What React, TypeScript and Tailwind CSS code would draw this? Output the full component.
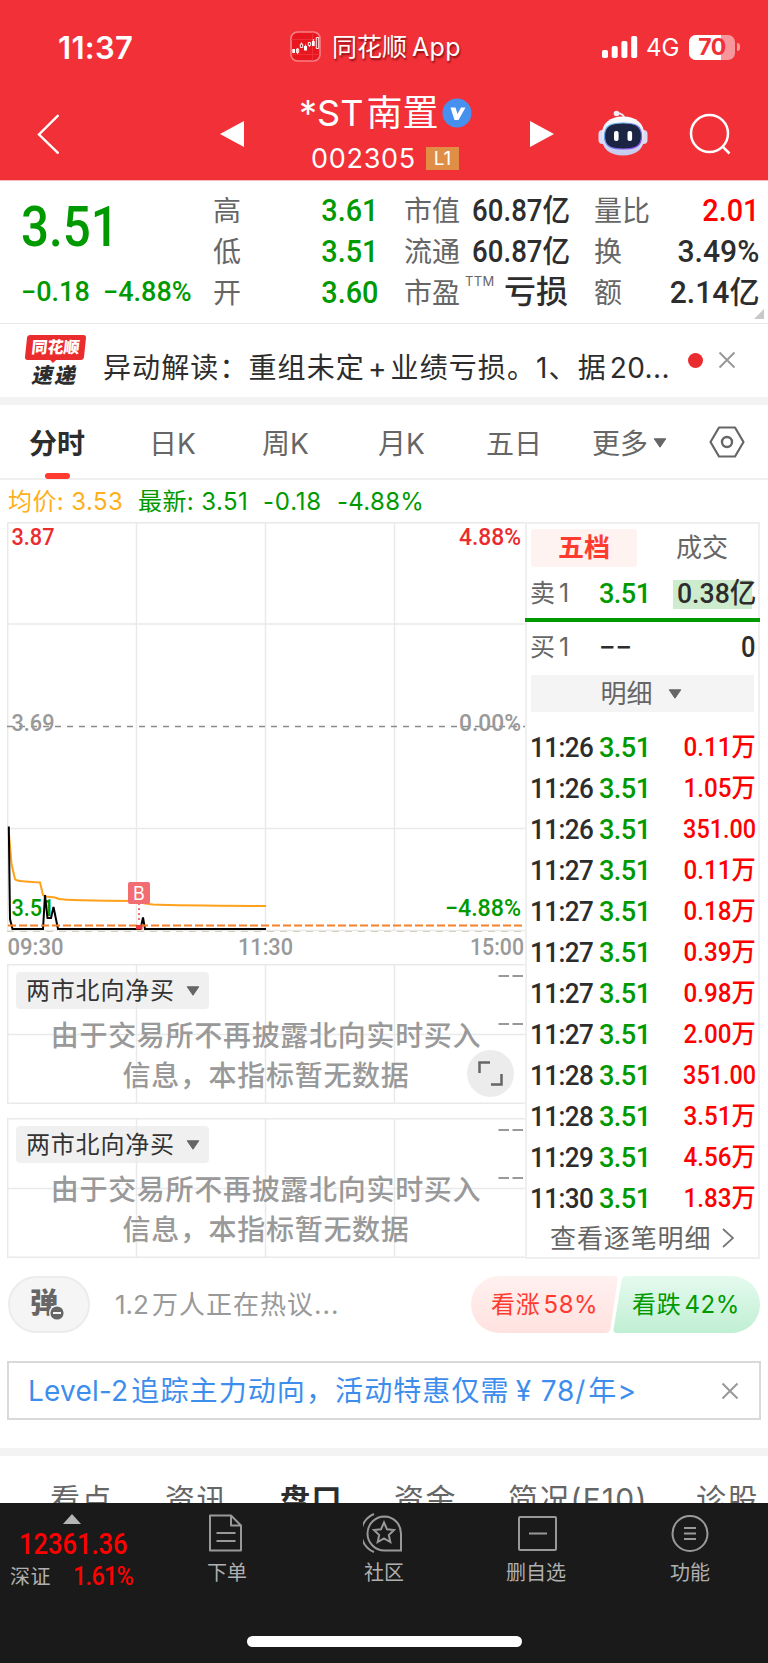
import type { ReactNode } from "react";
import clsx from "clsx";

const GREEN = "#009a00";

const ticks = [
  { time: "11:26", price: "3.51", amount: "0.11万" },
  { time: "11:26", price: "3.51", amount: "1.05万" },
  { time: "11:26", price: "3.51", amount: "351.00" },
  { time: "11:27", price: "3.51", amount: "0.11万" },
  { time: "11:27", price: "3.51", amount: "0.18万" },
  { time: "11:27", price: "3.51", amount: "0.39万" },
  { time: "11:27", price: "3.51", amount: "0.98万" },
  { time: "11:27", price: "3.51", amount: "2.00万" },
  { time: "11:28", price: "3.51", amount: "351.00" },
  { time: "11:28", price: "3.51", amount: "3.51万" },
  { time: "11:29", price: "3.51", amount: "4.56万" },
  { time: "11:30", price: "3.51", amount: "1.83万" },
];

// Condensed figures used for every price
function Num({ children, className }: { children: ReactNode; className?: string }) {
  return (
    <span
      className={clsx(
        "inline-block whitespace-nowrap font-['Roboto','Noto_Sans_CJK_SC',sans-serif] font-medium",
        className,
      )}
    >
      {children}
    </span>
  );
}

function Caret({ className }: { className?: string }) {
  return (
    <svg viewBox="0 0 14 10" className={clsx("h-[10px] w-[14px] shrink-0", className)}>
      <path d="M1.2.8h11.6L7 9.2z" fill="#666" stroke="#666" strokeLinejoin="round" />
    </svg>
  );
}

function Close({ className }: { className?: string }) {
  return (
    <svg viewBox="0 0 18 18" className={clsx("h-[18px] w-[18px] shrink-0", className)}>
      <path d="M1.500 1.500l15 15M16.500 1.500l-15 15" stroke="#999" strokeWidth="2" />
    </svg>
  );
}

function StatusBar() {
  return (
    <div className="flex h-[92px] items-center pl-[58px]">
      <span className="w-[232px] pt-[3px] text-[31px] leading-[40px] font-semibold tracking-[0.3px]">11:37</span>
      <svg viewBox="0 0 31 31" className="h-[31px] w-[31px]">
        <rect x="1" y="1" width="29" height="29" rx="6.5" fill="#e8171f" stroke="#f98085" strokeWidth="1.6" />
        <path d="M1 8.500h29M1 23.500h29M22.500 1v29" stroke="#f03a40" strokeWidth=".7" />
        <path d="M2.300 18h2.700v4h-2.700zM14 15h3v4.500h-3zM22 10h2.700v5h-2.700z" fill="#fff" />
        <path
          d="M6.500 18h2.200v3.500H6.500zM7.600 17v6M10.300 13h2.400v3.500h-2.400zM11.500 11.500v1.500M18.300 11.500h2.300v3h-2.300zM19.500 14.500v1.500M26.300 6.500h2.400v11h-2.400zM15.500 13.500v2M23.400 8v2"
          fill="none"
          stroke="#fff"
          strokeWidth=".9"
        />
      </svg>
      <span className="ml-[11px] w-[270px] pt-[2px] text-[25px] leading-[40px] text-shadow-[1px_2px_2px_rgb(90_0_0/0.7)]">
        同花顺<span className="ml-[5px] tracking-[0.3px]">App</span>
      </span>
      <svg viewBox="0 0 36 22" className="mt-[2px] h-[22px] w-9" fill="#fff">
        <rect y="14" width="6" height="8" rx="1.8" />
        <rect x="9.700" y="10" width="6" height="12" rx="1.800" />
        <rect x="19.400" y="5" width="6" height="17" rx="1.800" />
        <rect x="29.200" y="0" width="6" height="22" rx="1.800" />
      </svg>
      <span className="ml-[8px] w-[43px] pt-[3px] text-[24px] leading-[40px]">4G</span>
      <div className="relative mt-[2px] flex h-[25px] w-[46px] items-center justify-center">
        <div className="absolute inset-0 overflow-hidden rounded-[7px] bg-[#f8979b]">
          <div className="h-full w-8 bg-white" />
        </div>
        <span className="relative text-[23px] leading-[25px] font-bold tracking-[-0.5px] text-[#f23038]">70</span>
      </div>
      <div className="mt-[2px] ml-0.5 h-2 w-[3px] rounded-r-full bg-[#f8979b]" />
    </div>
  );
}

function Robot() {
  return (
    <svg viewBox="0 0 50 46" className="h-[46px] w-[50px]">
      <defs>
        <linearGradient id="shell" x1="0" y1="0" x2="0" y2="1">
          <stop offset="0" stopColor="#fff" />
          <stop offset="1" stopColor="#c3c9ee" />
        </linearGradient>
        <linearGradient id="rim" x1="0" y1="0" x2="1" y2="1">
          <stop offset="0" stopColor="#62c4ee" />
          <stop offset="1" stopColor="#8a3df0" />
        </linearGradient>
      </defs>
      <path d="M26 8c0-3-2-4.500-7-5" fill="none" stroke="#e6e6f4" strokeWidth="2" />
      <circle cx="18.500" cy="3.500" r="2.800" fill="#f3eef8" />
      <rect x="0.500" y="20" width="8" height="14" rx="4" fill="#d9dcf3" />
      <rect x="41.500" y="20" width="8" height="14" rx="4" fill="#d9dcf3" />
      <path
        d="M25 6.500C38 6.500 46.500 13 46.500 26S38 45.500 25 45.500 3.500 39 3.500 26 12 6.500 25 6.500z"
        fill="url(#shell)"
      />
      <path
        d="M25 13C38 13 43.500 16 43.500 26S38 39 25 39 6.500 36 6.500 26 12 13 25 13z"
        fill="#1c2444"
        stroke="url(#rim)"
        strokeWidth="1.200"
      />
      <rect x="16" y="21" width="4.600" height="10" rx="2" fill="#fff" />
      <rect x="29.500" y="21" width="4.600" height="10" rx="2" fill="#fff" />
    </svg>
  );
}

function TitleBar() {
  return (
    <div className="flex h-[88px] items-start">
      <svg viewBox="0 0 22 40" className="mt-[22px] ml-[37px] h-10 w-[22px]">
        <path d="M21.500 1L2 20.500l19.500 19" fill="none" stroke="#fff" strokeWidth="2.400" />
      </svg>
      <svg viewBox="0 0 24 26" className="mt-[29px] ml-[161px] h-[26px] w-6">
        <path d="M24 0v26L0 13z" fill="#fff" />
      </svg>
      <div className="ml-[55px] w-[175px]">
        <div className="flex h-[42px] items-center">
          <span className="w-[139px] text-[36px] leading-[42px] whitespace-nowrap">
            *ST<span className="ml-[3px]">南置</span>
          </span>
          <svg viewBox="0 0 30 30" className="ml-[4px] h-[30px] w-[30px] shrink-0">
            <circle cx="15" cy="15" r="14.500" fill="#4690f0" />
            <path d="M8.500 9.500h5l2 6.500 3.500-6.500h4.500l-7 12.500h-4z" fill="#fff" />
          </svg>
        </div>
        <div className="mt-[8px] flex h-8 items-center pl-[12px]">
          <span className="w-[115px] pt-px text-[27px] leading-8 tracking-[0.7px]">002305</span>
          <span className="h-[23px] w-[33px] bg-[#e08e46] text-center text-[19px] leading-[23px]">L1</span>
        </div>
      </div>
      <svg viewBox="0 0 24 26" className="mt-[29px] ml-[56px] h-[26px] w-6">
        <path d="M0 0v26l24-13z" fill="#fff" />
      </svg>
      <div className="mt-[18px] ml-[44px]">
        <Robot />
      </div>
      <svg viewBox="0 0 42 42" className="mt-[21px] ml-[41px] h-[42px] w-[42px]" fill="none" stroke="#fff" strokeWidth="2.500">
        <circle cx="20.500" cy="20.500" r="18.500" />
        <path d="M33 33l7.500 7.500" />
      </svg>
    </div>
  );
}

function Stat({ label, sup, children }: { label: string; sup?: string; children: ReactNode }) {
  return (
    <div className="flex h-[41px] items-center whitespace-nowrap">
      <span className="pt-[6px] text-[28px] leading-[35px] text-[#666]">{label}</span>
      {sup && <span className="mb-[18px] ml-[5px] text-[13px] tracking-[0.3px] text-[#666]">{sup}</span>}
      <div className="ml-auto pt-[2px] text-[31px] leading-[39px]">{children}</div>
    </div>
  );
}

function Quote() {
  return (
    <div className="flex h-[144px] border-t border-[#f9babd] border-b border-b-[#e8e8e8] bg-white pt-[7px]">
      <div className="w-[213px] pl-[21px] text-[#009a00]">
        <Num className="mt-[9px] origin-left scale-x-[0.88] text-[56px] leading-[60px]">3.51</Num>
        <div className="mt-[20px] flex text-[27px] leading-[30px]">
          <Num className="w-[82px]">−0.18</Num>
          <Num>−4.88%</Num>
        </div>
      </div>
      <div className="w-[165px] text-[#009a00]">
        <Stat label="高">
          <Num className="origin-right scale-x-[0.93]">3.61</Num>
        </Stat>
        <Stat label="低">
          <Num className="origin-right scale-x-[0.93]">3.51</Num>
        </Stat>
        <Stat label="开">
          <Num className="origin-right scale-x-[0.93]">3.60</Num>
        </Stat>
      </div>
      <div className="ml-[26px] w-[164px] text-[#2d2d2d]">
        <Stat label="市值">
          <Num className="origin-right scale-x-[0.89]">60.87亿</Num>
        </Stat>
        <Stat label="流通">
          <Num className="origin-right scale-x-[0.89]">60.87亿</Num>
        </Stat>
        <Stat label="市盈" sup="TTM">
          <Num className="text-[32px]">亏损</Num>
        </Stat>
      </div>
      <div className="relative ml-[26px] w-[174px] pr-[9px] text-[#2d2d2d]">
        <Stat label="量比">
          <Num className="origin-right scale-x-[0.93] text-[#f00]">2.01</Num>
        </Stat>
        <Stat label="换">
          <Num className="origin-right scale-x-[0.97]">3.49%</Num>
        </Stat>
        <Stat label="额">
          <Num className="origin-right scale-x-[0.97]">2.14亿</Num>
        </Stat>
        <svg viewBox="0 0 10 10" className="absolute right-[4px] bottom-[4px] h-[10px] w-[10px]">
          <path d="M10 0v10H0z" fill="#c8c8c8" />
        </svg>
      </div>
    </div>
  );
}

function News() {
  return (
    <div className="flex h-[81px] items-start border-b-8 border-[#f3f3f3] bg-white">
      <div className="mt-[11px] ml-[25px] w-[61px] text-center">
        <div className="relative mx-px h-[25px] w-[59px] -skew-x-6 rounded-[3px] bg-[#ea2c2f] text-[16px] leading-[25px] font-black text-white">
          同花顺
          <div className="absolute top-[22px] left-[26px] h-[5px] w-[5px] rotate-45 bg-[#ea2c2f]" />
        </div>
        <div className="mt-[5px] -skew-x-12 text-[21px] leading-[22px] font-black tracking-[2px] text-[#2d2d2d]">速递</div>
      </div>
      <p className="mt-[24px] ml-[17px] w-[577px] text-[28px] leading-[40px] tracking-[1.1px] whitespace-nowrap text-[#2d2d2d]">
        异动解读：重组未定<span className="mr-[3px] ml-[3px]">+</span>业绩亏损。1、据
        <span className="ml-[3px] tracking-[0.4px]">20...</span>
      </p>
      <div className="mt-[29px] ml-[8px] h-[15px] w-[15px] rounded-full bg-[#ea2c2f]" />
      <Close className="mt-[27px] ml-[15px]" />
    </div>
  );
}

function PeriodTabs() {
  return (
    <div className="flex h-[75px] border-b-2 border-[#efefef] bg-white text-[28px] leading-[78px] whitespace-nowrap text-[#666]">
      <div className="relative ml-[29px] w-[120px] font-bold text-[#2d2d2d]">
        分时
        <div className="absolute top-[68px] left-[16px] h-[6px] w-[25px] rounded-full bg-[#ff3b30]" />
      </div>
      <span className="w-[113px]">日K</span>
      <span className="w-[116px]">周K</span>
      <span className="w-[108px]">月K</span>
      <span className="w-[106px]">五日</span>
      <span className="flex w-[117px]">
        更多
        <Caret className="mt-[33px] ml-[5px]" />
      </span>
      <svg viewBox="0 0 36 32" className="mt-[21px] h-8 w-9" fill="none" stroke="#666">
        <path d="M10 1.500h16L34.500 16 26 30.500H10L1.500 16z" strokeWidth="2.200" strokeLinejoin="round" />
        <circle cx="18" cy="16" r="5" strokeWidth="2.400" />
      </svg>
    </div>
  );
}

function Legend() {
  return (
    <div className="flex h-[42px] items-center bg-white pt-[2px] text-[24px] whitespace-nowrap text-[#009a00]">
      <span className="ml-[8px] w-[130px] tracking-[0.4px] text-[#ffaf1a]">均价: 3.53</span>
      <span className="w-[125px] tracking-[0.4px]">最新: 3.51</span>
      <span className="w-[74px] tracking-[0.8px]">-0.18</span>
      <span className="tracking-[0.3px]">-4.88%</span>
    </div>
  );
}

function PriceChart() {
  const label = "font-['Roboto',sans-serif] text-[24px] font-medium";
  return (
    <svg viewBox="0 0 518 442" className="block h-[442px] w-[518px]">
      <g fill="none" stroke="#e9e9e9" strokeWidth="1.5">
        <path d="M.7 .7h517M.7 102h517M.7 306.500h517M.7 408.500h517" />
        <path d="M.7 0v409M129.500 0v409M258.500 0v409M387.500 0v409" />
      </g>
      <path d="M0 204.500h518" stroke="#8c8c8c" strokeWidth="1.300" strokeDasharray="6 6" />
      <path d="M0 409.500h518" stroke="#d8cfb8" strokeWidth="1" strokeDasharray="7 6" />
      <g className={label}>
        <text x="4.500" y="23" textLength="43" lengthAdjust="spacingAndGlyphs" fill="#ea2c2f">3.87</text>
        <text x="452" y="23" textLength="62" lengthAdjust="spacingAndGlyphs" fill="#ea2c2f">4.88%</text>
        <text x="4.500" y="209" textLength="43" lengthAdjust="spacingAndGlyphs" fill="#999">3.69</text>
        <text x="452" y="209" textLength="62" lengthAdjust="spacingAndGlyphs" fill="#999">0.00%</text>
        <text x="4.500" y="394" textLength="43" lengthAdjust="spacingAndGlyphs" fill={GREEN}>3.51</text>
        <text x="438" y="394" textLength="76" lengthAdjust="spacingAndGlyphs" fill={GREEN}>−4.88%</text>
        <text x="0.500" y="433" textLength="56" lengthAdjust="spacingAndGlyphs" fill="#999">09:30</text>
        <text x="231" y="433" textLength="55" lengthAdjust="spacingAndGlyphs" fill="#999">11:30</text>
        <text x="463" y="433" textLength="54" lengthAdjust="spacingAndGlyphs" fill="#999">15:00</text>
      </g>
      {/* average */}
      <path
        d="M2 312L4.500 342L8 357C8.500 359 15 359.500 33 360.500L36 373L39 374.500L48 375.500L52 377Q60 378.500 129 379L138 381.500L146 382.500Q170 383.500 259 384"
        fill="none"
        stroke="#ffa11a"
        strokeWidth="2"
      />
      {/* price */}
      <path
        d="M1.800 304.500L3 397L5.500 407H36L38 373L40.500 396H44L46.500 385L51 407H133.500L136 395.500L138 407H259"
        fill="none"
        stroke="#000"
        strokeWidth="2"
      />
      <path d="M1 403.500h516" stroke="#f5812a" strokeWidth="2" strokeDasharray="8 3" />
      <path d="M132 381v20" stroke="#f26d71" strokeWidth="2" strokeDasharray="2 3" />
      <rect x="129" y="403" width="6.500" height="4.500" fill="#e8383c" />
      <rect x="121" y="360" width="22" height="22" rx="2" fill="#f26d71" />
      <text x="132" y="377.500" textAnchor="middle" fill="#fff" className="font-['Inter'] text-[18px]">
        B
      </text>
    </svg>
  );
}

function FlowPanel({ expandable }: { expandable?: boolean }) {
  return (
    <div className="relative h-[140px]">
      <svg viewBox="0 0 518 140" className="absolute inset-0 h-full w-full" fill="none" stroke="#e9e9e9" strokeWidth="1.500">
        <path d="M.7.700h517M.7 70.500h517M.7 139.300h517M.7 0v140M129.500 0v140M258.500 0v140M387.500 0v140" />
        <path d="M491.500 12h10.500M505.500 12h10.500M491.500 60h10.500M505.500 60h10.500" stroke="#999" strokeWidth="2" />
      </svg>
      <div className="relative px-[9px] pt-[8px]">
        <div className="flex h-[37px] w-[193px] items-center rounded-[4px] bg-[#e9e9e9]/70 pl-[10px] text-[24px] tracking-[0.8px] text-[#333]">
          两市北向净买
          <Caret className="ml-[11px]" />
        </div>
      </div>
      <p className="relative w-[518px] pt-[7px] text-center text-[28px] leading-[40px] font-medium tracking-[0.7px] text-[#999]">
        由于交易所不再披露北向实时买入
        <br />
        信息，本指标暂无数据
      </p>
      {expandable && (
        <div className="absolute top-[86px] left-[460px] flex h-[47px] w-[47px] items-center justify-center rounded-full bg-[#ececec]">
          <svg viewBox="0 0 25 25" className="h-[25px] w-[25px]" fill="none" stroke="#666" strokeWidth="2.500">
            <path d="M1.500 12V1.500H12M23.500 13v10.500H13" />
          </svg>
        </div>
      )}
    </div>
  );
}

function OrderBook() {
  return (
    <div className="flex h-[737px] w-[235px] flex-col border-2 border-[#efefef] text-[#2d2d2d]">
      <div className="flex h-[44px] items-center pt-[4px] pl-[4px] text-[26px] leading-[38px]">
        <span className="w-[106px] rounded-[4px] bg-[#fff3f2] text-center font-bold text-[#ff3b30]">五档</span>
        <span className="ml-[39px] text-[#666]">成交</span>
      </div>
      <div className="flex h-[50px] items-center pt-[2px] pl-[3px]">
        <span className="w-[69px] text-[25px] text-[#666]">
          卖<span className="ml-[4px]">1</span>
        </span>
        <Num className="w-[74px] origin-left scale-x-[0.97] text-[28px] tracking-[-0.6px] text-[#009a00]">3.51</Num>
        <span className="flex h-[29px] w-[79px] items-center bg-[#cdebcd] pl-[4px]">
          <Num className="origin-left scale-x-[0.95] text-[28px]">0.38亿</Num>
        </span>
      </div>
      <div className="-mx-0.5 h-1 shrink-0 bg-[#009a00]" />
      <div className="flex h-[50px] items-center pt-px pr-[3px] pl-[3px]">
        <span className="w-[69px] text-[25px] text-[#666]">
          买<span className="ml-[4px]">1</span>
        </span>
        <Num className="origin-left scale-x-105 text-[28px]">−−</Num>
        <Num className="ml-auto origin-right scale-x-[0.88] text-[29px]">0</Num>
      </div>
      <div className="mt-[3px] mr-[4px] ml-[4px] flex h-[37px] items-center justify-center bg-[#f4f4f4] pr-[3px] text-[26px] leading-[37px] text-[#666]">
        明细
        <Caret className="ml-[15px]" />
      </div>
      <div className="mt-[15px]">
        {ticks.map((tick, i) => (
          <div key={i} className="flex h-[41px] items-center pr-[2px] pl-[3px] text-[28px] leading-[41px]">
            <Num className="w-[69px] origin-left scale-x-[0.93] tracking-[-0.6px]">{tick.time}</Num>
            <Num className="origin-left scale-x-[0.97] tracking-[-0.6px] text-[#009a00]">{tick.price}</Num>
            <Num
              className={clsx(
                "ml-auto origin-right text-[26px] text-[#f00]",
                tick.amount.endsWith("万") ? "scale-x-[0.93]" : "scale-x-[0.9]",
              )}
            >
              {tick.amount}
            </Num>
          </div>
        ))}
      </div>
      <div className="flex h-[38px] items-center pl-[23px] text-[26px] tracking-[0.9px] text-[#666]">
        查看逐笔明细
        <svg viewBox="0 0 12 20" className="ml-[11px] h-5 w-3" fill="none" stroke="#777" strokeWidth="1.800">
          <path d="M1 1l10 9-10 9" />
        </svg>
      </div>
    </div>
  );
}

function Discussion() {
  return (
    <div className="flex h-[91px] items-center pl-[8px]">
      <div className="relative flex h-[57px] w-[82px] items-center rounded-full border-2 border-[#ececec] bg-[#f5f5f5] pb-[4px] pl-[20px] text-[28px] font-black text-[#666]">
        弹
        <svg viewBox="0 0 16 16" className="absolute top-[27px] left-[39px] h-4 w-4">
          <circle cx="8" cy="8" r="7.300" fill="#666" stroke="#f5f5f5" strokeWidth="1.400" />
          <path d="M4 8h8" stroke="#f5f5f5" strokeWidth="2" />
        </svg>
      </div>
      <span className="ml-[25px] w-[356px] text-[26px] tracking-[1px] text-[#999]">
        <span className="mr-[3px] tracking-normal">1.2</span>万人正在热议...
      </span>
      <div className="relative flex h-[57px] w-[289px] items-center text-[24px] whitespace-nowrap">
        <svg viewBox="0 0 289 57" className="absolute inset-0 h-full w-full">
          <defs>
            <linearGradient id="up" x1="0" y1="0" x2="0" y2="1">
              <stop offset="0" stopColor="#fff1f0" />
              <stop offset="1" stopColor="#ffe2df" />
            </linearGradient>
            <linearGradient id="down" x1="0" y1="0" x2="0" y2="1">
              <stop offset="0" stopColor="#e4faee" />
              <stop offset="1" stopColor="#c0efd3" />
            </linearGradient>
          </defs>
          <path d="M28.500 0H143q4 0 3.500 4l-7 48q-1 5-5 5H28.500a28.500 28.500 0 010-57z" fill="url(#up)" />
          <path d="M156 0H260.500a28.500 28.500 0 010 57H146q-4 0-3.500-4l8-48q1-5 5.500-5z" fill="url(#down)" />
        </svg>
        <span className="relative ml-[20px] w-[141px] text-[#ff3b30]">
          <span className="tracking-[0.8px]">看涨</span>
          <span className="ml-[3px] tracking-[0.5px]">58%</span>
        </span>
        <span className="relative text-[#009a00]">
          <span className="tracking-[0.8px]">看跌</span>
          <span className="ml-[3px] tracking-[0.5px]">42%</span>
        </span>
      </div>
    </div>
  );
}

function SectionTabs() {
  return (
    <div className="flex h-[47px] overflow-hidden bg-white pt-[16px] text-[30px] leading-[54px] whitespace-nowrap text-[#666]">
      <span className="ml-[50px] w-[115px] tracking-[1.5px]">看点</span>
      <span className="w-[115px] tracking-[1.5px]">资讯</span>
      <span className="w-[114px] font-bold tracking-[1.5px] text-[#2d2d2d]">盘口</span>
      <span className="w-[114px] tracking-[1.5px]">资金</span>
      <span className="w-[188px] tracking-[1.3px]">简况(F10)</span>
      <span className="tracking-[1.5px]">诊股</span>
    </div>
  );
}

function NavItem({ label, className, children }: { label: string; className: string; children: ReactNode }) {
  return (
    <div className={clsx("flex flex-col items-center pt-[9px]", className)}>
      <svg viewBox="0 0 42 42" className="h-[42px] w-[42px]" fill="none" stroke="#999" strokeWidth="2">
        {children}
      </svg>
      <span className="mt-[4px] text-[20px] leading-[30px] whitespace-nowrap text-[#b0b0b0]">{label}</span>
    </div>
  );
}

function BottomNav() {
  return (
    <div className="flex h-[160px] flex-col bg-[#1a1a1a]">
      <div className="flex h-[133px]">
        <div className="w-[151px] pt-[11px] pl-[10px] text-[#f00]">
          <svg viewBox="0 0 18 10" className="ml-[53px] h-[10px] w-[18px]">
            <path d="M9 0l9 10H0z" fill="#b5b5b5" />
          </svg>
          <Num className="ml-[9px] origin-left scale-x-[0.88] text-[29px] leading-[41px]">12361.36</Num>
          <div className="flex h-6 items-center">
            <span className="w-[63px] text-[20px] tracking-[0.5px] text-[#b0b0b0]">深证</span>
            <Num className="origin-left scale-x-[0.94] text-[25px] leading-6 tracking-[-0.8px]">1.61%</Num>
          </div>
        </div>
        <NavItem label="下单" className="ml-[30px] w-[92px]">
          <path d="M4 3.500h21l10 10v25H4zM25 3.500v10h10" strokeLinejoin="round" />
          <path d="M10.500 21h19M10.500 29h19" />
        </NavItem>
        <NavItem label="社区" className="ml-[65px] w-[92px]">
          <path d="M21.500 4.500a17 17 0 000 34h16.500V21.500A16.700 17 0 0021.500 4.500zM11 2a20.500 20.500 0 000 38" />
          <path d="M21 10.500l3 6.800 7 .7-5.200 5 1.500 7-6.300-3.600-6.300 3.600 1.500-7-5.200-5 7-.7z" />
        </NavItem>
        <NavItem label="删自选" className="ml-[60px] w-[92px]">
          <rect x="4" y="5" width="37" height="33" rx="1" />
          <path d="M14 21.500h18" />
        </NavItem>
        <NavItem label="功能" className="ml-[62px] w-[92px]">
          <circle cx="21" cy="21.500" r="17.500" />
          <path d="M15 16h12M15 21.500h12M15 27h12" />
        </NavItem>
      </div>
      <div className="mx-auto h-[11px] w-[275px] rounded-full bg-white" />
    </div>
  );
}

export default function App() {
  return (
    <div className="h-[1663px] w-[768px] overflow-hidden bg-white font-['Inter','Noto_Sans_CJK_SC',sans-serif]">
      <header className="bg-[#f23038] text-white">
        <StatusBar />
        <TitleBar />
      </header>
      <Quote />
      <News />
      <PeriodTabs />
      <Legend />
      <main className="flex h-[737px] pl-[7px]">
        <div className="w-[518px]">
          <PriceChart />
          <FlowPanel expandable />
          <div className="h-[14px]" />
          <FlowPanel />
        </div>
        <OrderBook />
      </main>
      <Discussion />
      <div className="mt-[11px] mr-[7px] ml-[7px] flex h-[59px] items-center border-2 border-[#d9d9d9] pl-[19px] text-[28px] whitespace-nowrap text-[#3d8eec]">
        <span className="w-[693px] tracking-[1.1px]">
          <span className="mr-[3px] tracking-[0.2px]">Level-2</span>追踪主力动向，活动特惠仅需
          <span className="mr-[2px] ml-[6px] tracking-[0.9px]">¥ 78/</span>年&gt;
        </span>
        <Close />
      </div>
      <div className="mt-[28px] h-2 bg-[#f3f3f3]" />
      <SectionTabs />
      <BottomNav />
    </div>
  );
}
